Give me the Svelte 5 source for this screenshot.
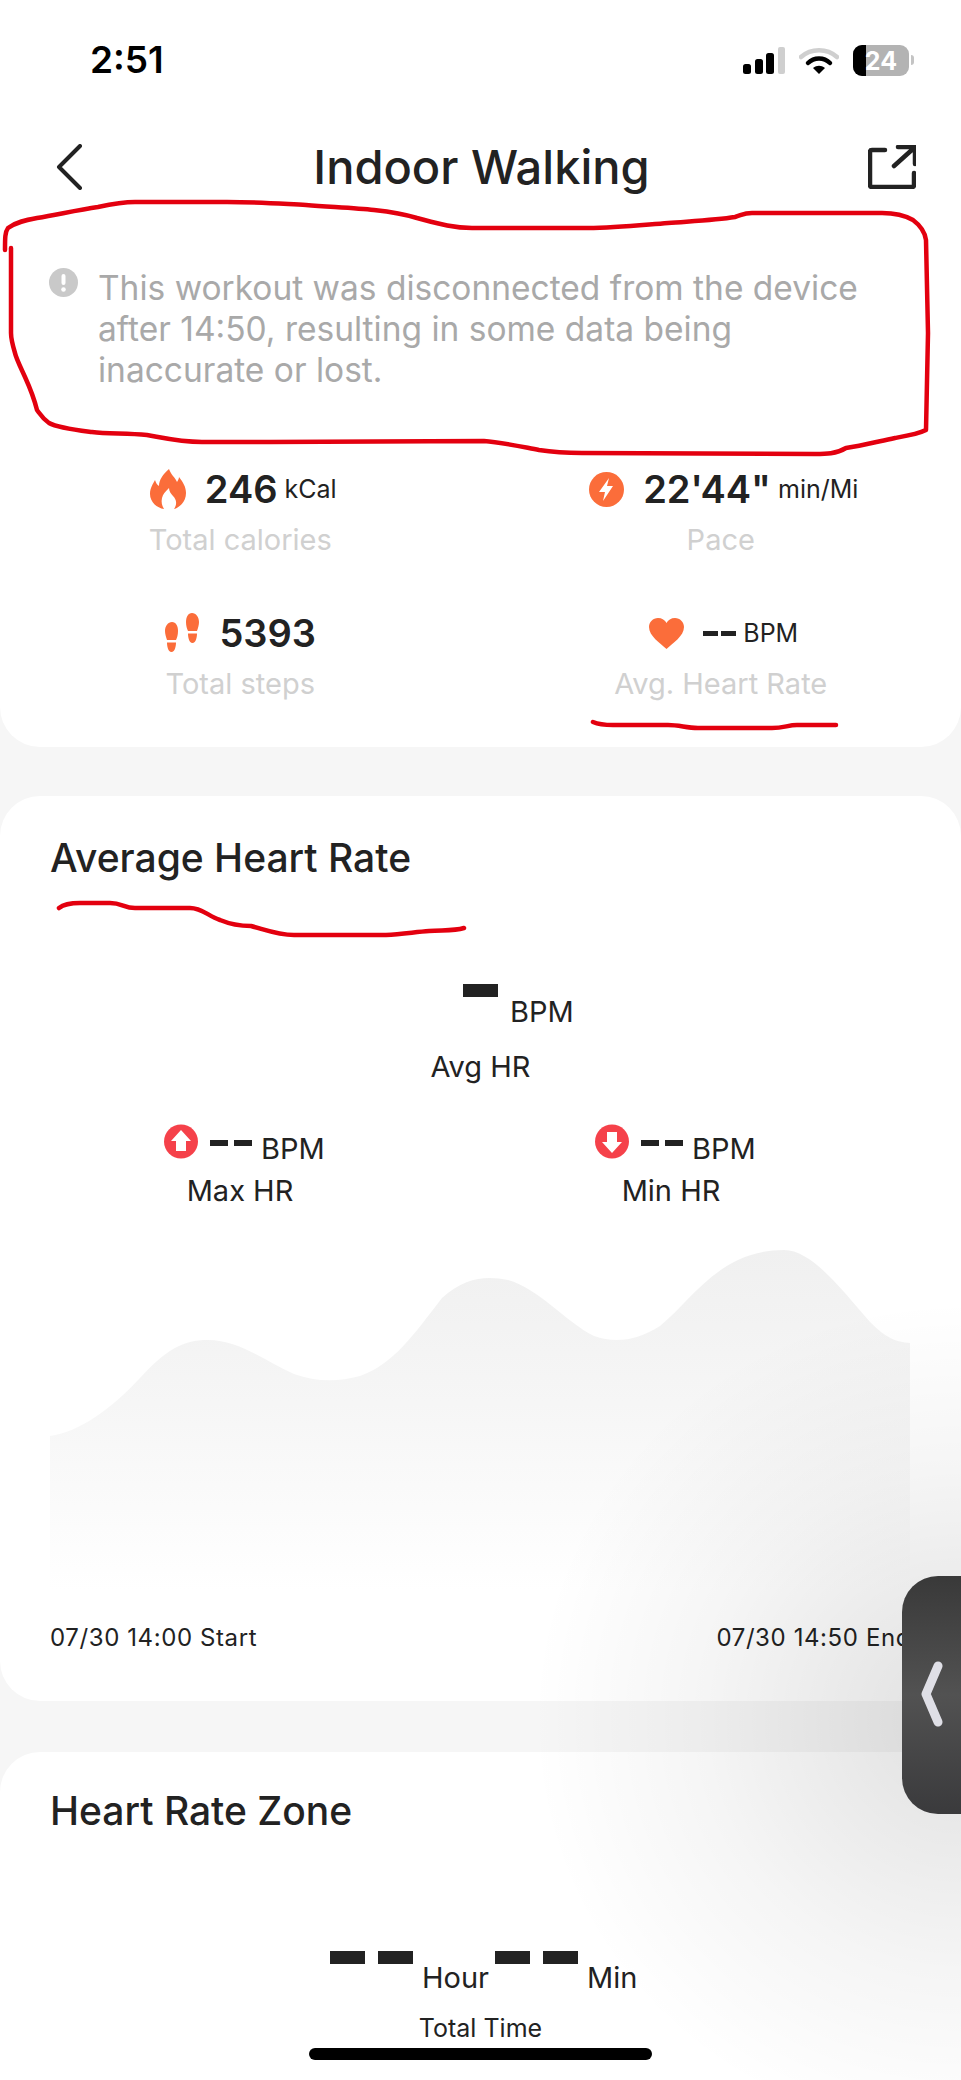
<script lang="ts">
  const redOutline =
    'M5 250 C5 238 5 232 8 228 C16 222 26 220 37 218 C60 214 78 210 98 207 C112 204 122 202 135 202 L227 202 C258 202 284 204 306 205 C332 207 356 208 374 210 C392 212 404 214 417 218 C436 223 452 228 472 228 L588 228 C616 228 642 225 668 223 C694 221 716 220 735 217 C742 215 744 213 752 213 L882 213 C896 213 906 216 913 220 C921 226 925 232 926 240 L928 333 L926 430 C918 434 906 436 895 438 C876 442 860 446 846 448 C836 454 826 454 815 454 L582 453 C566 453 552 452 539 450 C518 446 500 442 484 441 L270 442 L202 442 C180 442 164 438 147 435 C126 433 108 434 92 432 C76 430 58 428 49 423 C42 418 40 414 37 410 C34 398 30 388 25 377 C20 366 16 358 15 353 C12 343 11 338 11 333 L11 248'
  const redLineA = 'M593 722 C600 725 606 725 613 725 L668 725 C680 725 686 728 698 728 L772 728 C784 728 788 725 797 725 L836 725'
  const redLineB = 'M59 908 C64 904 72 903 80 903 L110 903 C122 903 124 908 135 908 L190 908 C202 908 208 916 220 920 C232 925 240 926 251 926 C266 930 278 935 294 935 L386 935 C402 934 416 932 429 931 C444 930 454 931 464 928'
  const chartLine =
    'M0 186 C30 182 62 158 90 128 C116 100 132 90 158 90 C190 90 216 112 244 124 C266 132 288 132 310 126 C344 114 364 84 392 48 C416 26 438 26 458 30 C488 38 516 72 544 86 C566 94 588 90 610 76 C642 50 670 0 734 0 C762 0 792 40 820 72 C836 88 846 92 860 93'
</script>

<div class="page">
  <section class="card top">
    <div class="status">
      <span class="clock">2:51</span>
      <div class="status-icons">
        <svg width="44" height="28" viewBox="0 0 44 28">
          <rect x="0" y="17" width="8" height="10" rx="2.5" fill="#000" />
          <rect x="12" y="12" width="8" height="15" rx="2.5" fill="#000" />
          <rect x="23" y="6" width="8" height="21" rx="2.5" fill="#000" />
          <rect x="35" y="0" width="7" height="27" rx="2" fill="#cfcfcf" />
        </svg>
        <svg class="wifi" width="40" height="30" viewBox="0 0 40 30">
          <path d="M2 12 C12 3 28 3 38 12" fill="none" stroke="#cfcfcf" stroke-width="4.5" stroke-linecap="round" />
          <path d="M9 18 C15 12 25 12 31 18" fill="none" stroke="#000" stroke-width="4.5" stroke-linecap="round" />
          <path d="M14 23 L20 29 L26 23 C22 20 18 20 14 23 Z" fill="#000" />
        </svg>
        <div class="battery"><span class="charge"></span><span class="pct">24</span></div>
        <span class="nub"></span>
      </div>
    </div>

    <div class="nav">
      <svg width="28" height="46" viewBox="0 0 28 46">
        <path d="M25 2 L4 23 L25 44" fill="none" stroke="#222" stroke-width="4" stroke-linecap="round" stroke-linejoin="round" />
      </svg>
      <h1>Indoor Walking</h1>
      <svg class="share" width="48" height="44" viewBox="0 0 48 44">
        <path d="M17 5 H4 Q2 5 2 7 V40 Q2 42 4 42 H44 Q46 42 46 40 V28" fill="none" stroke="#222" stroke-width="4.5" stroke-linecap="round" />
        <path d="M26 21 L46 3 M30 2 H47 V19" fill="none" stroke="#222" stroke-width="4.5" stroke-linecap="round" />
      </svg>
    </div>

    <div class="notice">
      <svg class="notice-icon" width="29" height="29" viewBox="0 0 29 29">
        <circle cx="14.5" cy="14.5" r="14.5" fill="#c9c9c9" />
        <rect x="12.5" y="6" width="4" height="11" rx="2" fill="#fff" />
        <circle cx="14.5" cy="21.5" r="2.3" fill="#fff" />
      </svg>
      <p>This workout was disconnected from the device after 14:50, resulting in some data being inaccurate or lost.</p>
    </div>

    <div class="stats">
      <div class="stat">
        <div class="stat-value nudge">
          <svg class="ic" width="36" height="40" viewBox="0 0 36 40">
            <path fill="#fb6d3a" d="M19 0 C21 6 25 8 27 13 C28 11 29 10 29 8 C33 13 36 18 36 24 C36 33 29 39 24 40 C27 36 27 31 23 27 C21 25 19 22 19 19 C15 23 13 25 12 29 C11 33 12 37 14 40 C7 39 0 33 0 25 C0 19 3 15 5 11 C6 14 7 16 9 17 C9 11 13 5 19 0 Z" />
          </svg>
          <strong>246</strong><small>kCal</small>
        </div>
        <span class="stat-label">Total calories</span>
      </div>
      <div class="stat">
        <div class="stat-value nudge">
          <svg class="ic" width="35" height="35" viewBox="0 0 35 35">
            <circle cx="17.5" cy="17.5" r="17.5" fill="#fb6d3a" />
            <path fill="#fff" d="M20 6 L10 20 H16 L14 29 L24 14 H18 Z" />
          </svg>
          <strong>22'44"</strong><small>min/Mi</small>
        </div>
        <span class="stat-label">Pace</span>
      </div>
      <div class="stat">
        <div class="stat-value">
          <svg class="ic" width="36" height="40" viewBox="0 0 36 40">
            <path fill="#fb6d3a" d="M8 9 C12 9 14 13 14 18 C14 22 13 25 12 27 H3 C2 24 1 21 1 18 C1 13 4 9 8 9 Z M3 29.5 H12 C12 33 11 39 7.5 39 C4 39 3 33 3 29.5 Z" />
            <path fill="#fb6d3a" d="M28 0 C32 0 35 4 35 9 C35 12 34 15 33 18 H24 C23 16 22 13 22 9 C22 4 24 0 28 0 Z M24 20.5 H33 C33 24 32 30 28.5 30 C25 30 24 24 24 20.5 Z" />
          </svg>
          <strong>5393</strong>
        </div>
        <span class="stat-label">Total steps</span>
      </div>
      <div class="stat">
        <div class="stat-value nudge">
          <svg class="ic" width="35" height="31" viewBox="0 0 35 31">
            <path fill="#fb6d3a" d="M17.5 31 C11 25 0 18 0 9 C0 4 4 0 9 0 C13 0 16 2 17.5 5 C19 2 22 0 26 0 C31 0 35 4 35 9 C35 18 24 25 17.5 31 Z" />
          </svg>
          <span class="dashes small"><i></i><i></i></span><small>BPM</small>
        </div>
        <span class="stat-label">Avg. Heart Rate</span>
      </div>
    </div>
  </section>

  <section class="card hr">
    <h2>Average Heart Rate</h2>
    <div class="avg">
      <i class="bar"></i><span class="unit">BPM</span>
    </div>
    <div class="caption">Avg HR</div>

    <div class="minmax">
      <div class="mm">
        <div class="mm-value">
          <svg width="34" height="35" viewBox="0 0 34 35">
            <circle cx="17" cy="17.5" r="17" fill="#f5414a" />
            <path fill="#fff" d="M17 6 L27 17 H22 V27 H12 V17 H7 Z" />
          </svg>
          <span class="dashes"><i></i><i></i></span><span class="unit">BPM</span>
        </div>
        <div class="mm-label">Max HR</div>
      </div>
      <div class="mm">
        <div class="mm-value">
          <svg width="34" height="35" viewBox="0 0 34 35">
            <circle cx="17" cy="17.5" r="17" fill="#f5414a" />
            <path fill="#fff" d="M17 29 L7 18 H12 V8 H22 V18 H27 Z" />
          </svg>
          <span class="dashes"><i></i><i></i></span><span class="unit">BPM</span>
        </div>
        <div class="mm-label">Min HR</div>
      </div>
    </div>

    <svg class="chart" width="860" height="340" viewBox="0 0 860 340">
      <defs>
        <linearGradient id="fade" x1="0" y1="0" x2="0" y2="1">
          <stop offset="0" stop-color="#f0f0f0" />
          <stop offset="0.45" stop-color="#f6f6f6" />
          <stop offset="1" stop-color="#ffffff" />
        </linearGradient>
      </defs>
      <path d="{chartLine} V340 H0 Z" fill="url(#fade)" />
    </svg>

    <div class="axis">
      <span>07/30 14:00 Start</span>
      <span>07/30 14:50 End</span>
    </div>
  </section>

  <section class="card zone">
    <h2>Heart Rate Zone</h2>
    <div class="total">
      <i class="bar"></i><i class="bar"></i><span class="unit">Hour</span>
      <i class="bar"></i><i class="bar"></i><span class="unit">Min</span>
    </div>
    <div class="total-label">Total Time</div>
  </section>

  <div class="shade"></div>

  <svg class="ink" width="961" height="2080" viewBox="0 0 961 2080">
    <path d={redOutline} />
    <path d={redLineA} />
    <path d={redLineB} />
  </svg>

  <div class="handle">
    <svg width="24" height="66" viewBox="0 0 24 66">
      <path d="M17 5 L5 33 L17 61" fill="none" stroke="#dfdfe6" stroke-width="9" stroke-linecap="round" stroke-linejoin="round" />
    </svg>
  </div>

  <div class="home-bar"></div>
</div>

<style>
  :global(body) {
    margin: 0;
    background: #f6f6f6;
  }

  .page {
    position: relative;
    width: 961px;
    height: 2080px;
    overflow: hidden;
    background: #f6f6f6;
    color: #222;
    font-family: Inter, "Liberation Sans", sans-serif;
  }

  .card {
    background: #fff;
    border-radius: 40px;
  }

  .top {
    height: 747px;
    border-radius: 0 0 40px 40px;
  }

  .status {
    height: 120px;
    display: flex;
    justify-content: space-between;
    padding: 0 47px 0 90px;
  }

  .clock {
    margin-top: 40px;
    font-size: 37px;
    line-height: 40px;
    font-weight: 600;
    color: #000;
  }

  .status-icons {
    display: flex;
    align-items: flex-start;
    margin-top: 45px;
    position: relative;
  }

  .status-icons > svg:first-child {
    margin-top: 2px;
    margin-right: 12px;
  }

  .wifi {
    margin-right: 14px;
  }

  .battery {
    position: relative;
    width: 56px;
    height: 31px;
    border-radius: 9px;
    background: #b3b3b3;
    overflow: hidden;
    display: flex;
    align-items: center;
    justify-content: center;
  }

  .charge {
    position: absolute;
    left: 0;
    top: 0;
    bottom: 0;
    width: 13px;
    background: #000;
  }

  .pct {
    position: relative;
    color: #fff;
    font-size: 25px;
    font-weight: 700;
  }

  .nub {
    width: 3px;
    height: 10px;
    margin: 10px 0 0 2px;
    background: #c4c4c4;
    border-radius: 0 3px 3px 0;
  }

  .nav {
    height: 94px;
    display: grid;
    grid-template-columns: 1fr auto 1fr;
    align-items: center;
    padding: 0 45px 0 55px;
  }

  .share {
    justify-self: end;
  }

  h1 {
    margin: 0 8px 0 0;
    font-size: 47px;
    line-height: 54px;
    font-weight: 500;
  }

  .notice {
    display: flex;
    gap: 20px;
    padding: 54px 80px 0 49px;
  }

  .notice-icon {
    flex: none;
  }

  .notice p {
    margin: 0;
    font-size: 33.5px;
    line-height: 41px;
    color: #a9a9a9;
  }

  .stats {
    display: grid;
    grid-template-columns: 1fr 1fr;
    row-gap: 53px;
    margin-top: 76px;
  }

  .stat {
    display: flex;
    flex-direction: column;
    align-items: center;
  }

  .stat-value {
    height: 44px;
    display: flex;
    align-items: center;
  }

  .nudge {
    padding-left: 6px;
  }

  .ic {
    margin-right: 19px;
  }

  .stat-value strong {
    font-size: 38px;
    font-weight: 600;
  }

  .stat-value small {
    margin-left: 7px;
    font-size: 25px;
  }

  .stat-label {
    margin-top: 11px;
    font-size: 29px;
    line-height: 36px;
    color: #d0d0d0;
  }

  .dashes {
    display: flex;
    gap: 6px;
  }

  .dashes i {
    width: 18px;
    height: 6px;
    background: #222;
  }

  .dashes.small {
    gap: 3px;
  }

  .dashes.small i {
    width: 15px;
    height: 5px;
  }

  .hr {
    margin-top: 49px;
    height: 905px;
    padding: 40px 50px 0;
    box-sizing: border-box;
  }

  h2 {
    margin: 0;
    font-size: 39px;
    line-height: 44px;
    font-weight: 500;
  }

  .avg {
    display: flex;
    align-items: flex-start;
    margin: 104px 0 0 413px;
  }

  .bar {
    width: 35px;
    height: 13px;
    background: #222;
  }

  .unit {
    font-size: 29px;
    line-height: 34px;
  }

  .avg .unit {
    margin: 11px 0 0 12px;
  }

  .caption {
    margin-top: 21px;
    text-align: center;
    font-size: 29px;
    line-height: 34px;
  }

  .minmax {
    display: flex;
    gap: 274px;
    margin: 39px 0 0 114px;
  }

  .mm {
    width: 157px;
  }

  .mm-value {
    display: flex;
    align-items: center;
    height: 37px;
  }

  .mm-value svg {
    flex: none;
  }

  .mm-value .dashes {
    margin: 2px 0 0 12px;
  }

  .mm-value .unit {
    margin-left: 9px;
    margin-top: 15px;
  }

  .mm-label {
    margin-top: 14px;
    padding-right: 5px;
    text-align: center;
    font-size: 29px;
    line-height: 34px;
  }

  .chart {
    display: block;
    margin-top: 42px;
  }

  .axis {
    display: flex;
    justify-content: space-between;
    margin-top: 33px;
    font-size: 24px;
    line-height: 30px;
    letter-spacing: 0.6px;
  }

  .zone {
    margin-top: 51px;
    height: 400px;
    padding: 37px 50px 0;
    box-sizing: border-box;
  }

  .total {
    display: flex;
    align-items: flex-start;
    margin: 118px 0 0 280px;
  }

  .total .bar {
    margin-right: 13px;
  }

  .total .unit {
    margin: 10px 6px 0 -4px;
  }

  .total-label {
    margin-top: 18px;
    text-align: center;
    font-size: 25px;
    line-height: 30px;
  }

  .shade {
    position: absolute;
    inset: 0;
    pointer-events: none;
    background: radial-gradient(ellipse 430px 420px at 961px 1720px, rgba(0, 0, 0, 0.12), rgba(0, 0, 0, 0.04) 60%, transparent);
  }

  .ink {
    position: absolute;
    left: 0;
    top: 0;
    pointer-events: none;
  }

  .ink path {
    fill: none;
    stroke: #e3000f;
    stroke-width: 4.5;
    stroke-linecap: round;
    stroke-linejoin: round;
  }

  .handle {
    position: absolute;
    left: 902px;
    top: 1576px;
    width: 59px;
    height: 238px;
    box-sizing: border-box;
    padding: 85px 0 0 19px;
    border-radius: 36px 0 0 36px;
    background: linear-gradient(#393939, #525252 50%, #3a3a3c);
  }

  .handle svg {
    display: block;
  }

  .home-bar {
    position: absolute;
    left: 309px;
    top: 2048px;
    width: 343px;
    height: 12px;
    border-radius: 6px;
    background: #000;
  }
</style>
